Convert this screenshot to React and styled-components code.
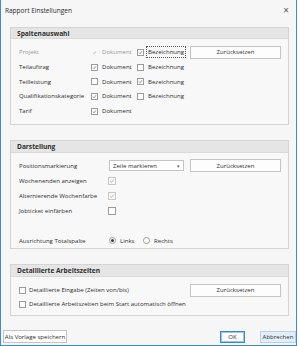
import React from 'react'
import styled, { createGlobalStyle } from 'styled-components'

const GlobalStyle = createGlobalStyle`
	html, body {
		margin: 0;
		padding: 0;
		background: #ffffff;
	}
	body {
		font-family: 'Open Sans', 'Liberation Sans', sans-serif;
		font-size: 6.05px;
		color: #2e2e2e;
	}
	* {
		box-sizing: border-box;
	}
`

const Window = styled.div`
	width: 297px;
	height: 346px;
	background: #f6f6f6;
	border-left: 1px solid #3f8ad8;
	border-right: 1px solid #3f8ad8;
	border-bottom: 1px solid #3f8ad8;
	display: flex;
	flex-direction: column;
`

const TitleBar = styled.div`
	height: 27px;
	display: flex;
	align-items: flex-start;
	justify-content: space-between;
	padding: 6px 7px 0 4px;
	font-size: 6.5px;
	color: #2a2a2a;
`

const Close = styled.span`
	font-size: 10px;
	line-height: 6px;
	color: #555;
	margin-top: 1px;
`

const Content = styled.div`
	display: flex;
	flex-direction: column;
	gap: 15px;
	padding: 0 7px 0 9px;
`

const Group = styled.section`
	border: 1px solid #d4d4d4;
	background: #f8f8f8;
	height: ${(p) => p.h}px;
`

const GroupHead = styled.div`
	height: ${(p) => p.h || 11}px;
	background: #e5e5e5;
	border-bottom: 1px solid #d9d9d9;
	padding-left: 6px;
	display: flex;
	align-items: center;
	font-weight: 700;
	font-size: 6.6px;
	color: #2e2e2e;
`

const Grid = styled.div`
	display: grid;
	grid-template-columns: ${(p) => p.cols};
	grid-auto-rows: ${(p) => p.row}px;
	align-items: center;
	padding: ${(p) => p.pad} 7px 0 8px;
`

const Label = styled.span`
	color: ${(p) => (p.disabled ? '#9a9a9a' : '#2e2e2e')};
	white-space: nowrap;
`

const CheckItem = styled.label`
	display: flex;
	align-items: center;
	gap: ${(p) => p.gap || 4}px;
	white-space: nowrap;
`

const Box = styled.span`
	width: ${(p) => p.size || 7}px;
	height: ${(p) => p.size || 7}px;
	flex: none;
	background: ${(p) => (p.disabled ? '#f8f8f8' : '#ffffff')};
	border: 1px solid ${(p) => (p.disabled ? (p.ghost ? 'transparent' : '#c9c9c9') : '#9c9c9c')};
	display: flex;
	align-items: center;
	justify-content: center;
	svg {
		width: 100%;
		height: 100%;
	}
`

const Focus = styled.span`
	outline: 1px dotted #555;
	outline-offset: 1px;
`

const Button = styled.button`
	font: inherit;
	color: #2e2e2e;
	height: ${(p) => p.h || 13}px;
	width: ${(p) => p.w}px;
	padding: 0;
	background: ${(p) => (p.cancel ? '#e3eef9' : '#fdfdfd')};
	border: 1px solid ${(p) => (p.primary ? '#3a86d6' : p.cancel ? '#b9cfe6' : '#c4c4c4')};
	${(p) => p.primary && 'box-shadow: inset 0 0 0 1px #9fc4ec;'}
	display: flex;
	align-items: center;
	justify-content: center;
`

const Select = styled.div`
	width: 75px;
	height: 11px;
	background: #ffffff;
	border: 1px solid #c4c4c4;
	display: flex;
	align-items: center;
	justify-content: space-between;
	padding: 0 3px 0 3px;
	margin-left: 1px;
	span:last-child {
		font-size: 5px;
		color: #606060;
	}
`

const RadioGroup = styled.div`
	display: flex;
	align-items: center;
	margin-left: 1px;
`

const RadioItem = styled.label`
	display: flex;
	align-items: center;
	gap: 4px;
	width: ${(p) => p.w}px;
`

const Radio = styled.span`
	width: 7px;
	height: 7px;
	border-radius: 50%;
	border: 1px solid #9c9c9c;
	background: #fff;
	display: flex;
	align-items: center;
	justify-content: center;
	&::after {
		content: '';
		width: 3px;
		height: 3px;
		border-radius: 50%;
		background: ${(p) => (p.checked ? '#3a3a3a' : 'transparent')};
	}
`

const Footer = styled.div`
	margin-top: auto;
	display: flex;
	align-items: center;
	padding: 0 0 2px 2px;
`

const Spacer = styled.div`
	flex: 1;
`

const Check = ({ color }) => (
	<svg viewBox='0 0 10 10'>
		<polyline points='2,5.3 4.1,7.5 8,2.4' fill='none' stroke={color} strokeWidth='1.3' />
	</svg>
)

const CheckBox = ({ checked, disabled, ghost, size, children, gap }) => (
	<CheckItem gap={gap}>
		<Box disabled={disabled} ghost={ghost} size={size}>
			{checked ? <Check color={disabled ? '#adadad' : '#555'} /> : null}
		</Box>
		{children}
	</CheckItem>
)

const columns = [
	{ name: 'Projekt', doc: true, bez: true, disabled: true },
	{ name: 'Teilauftrag', doc: true, bez: false },
	{ name: 'Teilleistung', doc: false, bez: true },
	{ name: 'Qualifikationskategorie', doc: true, bez: false },
]

const App = () => {
	return (
		<Window>
			<GlobalStyle />
			<TitleBar>
				<span>Rapport Einstellungen</span>
				<Close>×</Close>
			</TitleBar>
			<Content>
				{/* spaltenauswahl */}
				<Group h={98}>
					<GroupHead>Spaltenauswahl</GroupHead>
					<Grid cols='72px 46px 53px 91px' row={14.7} pad='6px'>
						{columns.map((c, index) => (
							<React.Fragment key={index}>
								<Label disabled={c.disabled}>{c.name}</Label>
								<CheckBox checked={c.doc} disabled={c.disabled} ghost={c.disabled}>
									{c.disabled ? <Label disabled>Dokument</Label> : 'Dokument'}
								</CheckBox>
								<CheckBox checked={c.bez}>
									{index === 0 ? <Focus>Bezeichnung</Focus> : 'Bezeichnung'}
								</CheckBox>
								{index === 0 ? <Button w={91}>Zurücksetzen</Button> : <span />}
							</React.Fragment>
						))}
						<Label>Tarif</Label>
						<CheckBox checked>Dokument</CheckBox>
					</Grid>
				</Group>
				{/* darstellung */}
				<Group h={109}>
					<GroupHead h={12}>Darstellung</GroupHead>
					<Grid cols='89px 82px 91px' row={15} pad='5px'>
						<Label>Positionsmarkierung</Label>
						<Select>
							<span>Zeile markieren</span>
							<span>▾</span>
						</Select>
						<Button w={91}>Zurücksetzen</Button>
						<Label>Wochenenden anzeigen</Label>
						<CheckBox checked disabled size={8} />
						<span />
						<Label>Alternierende Wochenfarbe</Label>
						<CheckBox checked disabled size={8} />
						<span />
						<Label>Jobticket einfärben</Label>
						<CheckBox size={8} />
						<span />
						<span />
						<span />
						<span />
						<Label>Ausrichtung Totalspalte</Label>
						<RadioGroup>
							<RadioItem w={34}>
								<Radio checked />
								Links
							</RadioItem>
							<RadioItem>
								<Radio />
								Rechts
							</RadioItem>
						</RadioGroup>
					</Grid>
				</Group>
				{/* detaillierte arbeitszeiten */}
				<Group h={52}>
					<GroupHead h={12}>Detaillierte Arbeitszeiten</GroupHead>
					<Grid cols='1fr 91px' row={14} pad='6px'>
						<CheckBox gap={3}>Detaillierte Eingabe (Zeiten von/bis)</CheckBox>
						<Button w={91}>Zurücksetzen</Button>
						<CheckBox gap={3}>Detaillierte Arbeitszeiten beim Start automatisch öffnen</CheckBox>
					</Grid>
				</Group>
			</Content>
			<Footer>
				<Button w={64}>Als Vorlage speichern</Button>
				<Spacer />
				<Button w={25} h={12} primary>
					OK
				</Button>
				<Button w={36} h={12} cancel style={{ marginLeft: 15 }}>
					Abbrechen
				</Button>
			</Footer>
		</Window>
	)
}

export default App
